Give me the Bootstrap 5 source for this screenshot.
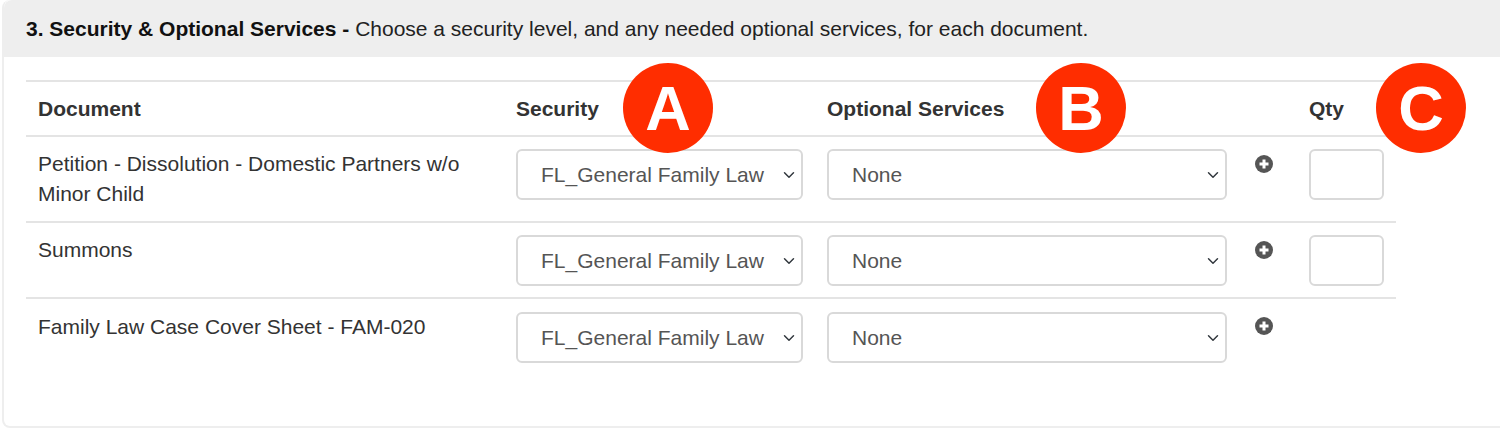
<!DOCTYPE html>
<html lang="en">

<head>
  <meta charset="UTF-8" />
  <meta name="viewport" content="width=device-width, initial-scale=1.0" />
  <title>Security &amp; Optional Services</title>
  <link href="https://cdn.jsdelivr.net/npm/bootstrap@5.3.0/dist/css/bootstrap.min.css" rel="stylesheet" />
  <style>
    body {
      background-color: #fff;
      color: #333;
      font-family: "Liberation Sans", Arial, sans-serif;
      font-size: 21px;
      overflow: hidden;
    }

    .step-wrap {
      padding-left: 2px;
      height: 431px;
      width: 1510px;
    }

    .step-card {
      height: 428px;
      border: 2px solid #eee;
      border-top: 0;
      border-radius: 8px;
      color: #333;
    }

    .step-head {
      height: 57px;
      background-color: #eee;
      border: 0;
      border-radius: 8px 8px 0 0 !important;
      padding: 16px 0 0 22px;
      line-height: 26px;
      color: #222;
    }

    .step-head b {
      color: #111;
    }

    .step-body {
      padding: 23px 0 0 22px;
    }

    .doc-table {
      width: 1370px;
      table-layout: fixed;
      margin: 0;
      --bs-table-color: #333;
      border-top: 2px solid #e4e4e4;
    }

    .doc-table th,
    .doc-table td {
      border-bottom: 2px solid #e4e4e4;
      padding: 12px;
      line-height: 30px;
      font-size: 21px;
      box-shadow: none;
    }

    .doc-table th {
      padding-top: 12px;
      padding-bottom: 11px;
    }

    .doc-table tbody td {
      padding-bottom: 11px;
    }

    .doc-table tbody tr:first-child td {
      padding-bottom: 12px;
    }

    .doc-table tr.last-row td {
      border-bottom: 0;
      padding-top: 13px;
    }

    .doc-select,
    .qty-input {
      height: 51px;
      border: 2px solid #d9d9d9;
      border-radius: 6px;
      color: #555;
      font-size: 21px;
      line-height: 28px;
      padding: 8px 30px 8px 23px;
      background-position: right 4px center;
    }

    .qty-input {
      width: 75px;
      padding: 8px;
    }

    .plus-ico {
      display: block;
      margin: 6px 0 0 4px;
    }

    .last-row .plus-ico {
      margin-top: 5px;
    }

    .mark-dot {
      position: absolute;
      top: 63px;
      width: 90px;
      height: 90px;
      border-radius: 50%;
      background-color: #ff2d00;
      color: #fff;
      font-size: 63px;
      font-weight: 700;
      line-height: 90px;
      text-align: center;
    }

    .mark-a { left: 623px; }
    .mark-b { left: 1036px; }
    .mark-c { left: 1376px; }
  </style>
</head>

<body>
  <div class="step-wrap position-relative">
    <div class="card step-card">
      <div class="card-header step-head">
        <b>3. Security &amp; Optional Services - </b>Choose a security level, and any needed optional services, for each document.
      </div>
      <div class="card-body step-body">
        <table class="table doc-table">
          <colgroup>
            <col style="width:478px" />
            <col style="width:311px" />
            <col style="width:424px" />
            <col style="width:58px" />
            <col style="width:99px" />
          </colgroup>
          <thead>
            <tr>
              <th>Document</th>
              <th>Security</th>
              <th colspan="2">Optional Services</th>
              <th>Qty</th>
            </tr>
          </thead>
          <tbody>
            <tr>
              <td>Petition - Dissolution - Domestic Partners w/o Minor Child</td>
              <td>
                <select class="form-select doc-select"><option>FL_General Family Law</option></select>
              </td>
              <td>
                <select class="form-select doc-select"><option>None</option></select>
              </td>
              <td>
                <svg class="plus-ico" width="18" height="18" viewBox="0 0 18 18"><circle cx="9" cy="9" r="9" fill="#555" /><path d="M9 4.5v9M4.5 9h9" stroke="#fff" stroke-width="3" /></svg>
              </td>
              <td><input type="text" class="form-control qty-input" /></td>
            </tr>
            <tr>
              <td>Summons</td>
              <td>
                <select class="form-select doc-select"><option>FL_General Family Law</option></select>
              </td>
              <td>
                <select class="form-select doc-select"><option>None</option></select>
              </td>
              <td>
                <svg class="plus-ico" width="18" height="18" viewBox="0 0 18 18"><circle cx="9" cy="9" r="9" fill="#555" /><path d="M9 4.5v9M4.5 9h9" stroke="#fff" stroke-width="3" /></svg>
              </td>
              <td><input type="text" class="form-control qty-input" /></td>
            </tr>
            <tr class="last-row">
              <td>Family Law Case Cover Sheet - FAM-020</td>
              <td>
                <select class="form-select doc-select"><option>FL_General Family Law</option></select>
              </td>
              <td>
                <select class="form-select doc-select"><option>None</option></select>
              </td>
              <td>
                <svg class="plus-ico" width="18" height="18" viewBox="0 0 18 18"><circle cx="9" cy="9" r="9" fill="#555" /><path d="M9 4.5v9M4.5 9h9" stroke="#fff" stroke-width="3" /></svg>
              </td>
              <td></td>
            </tr>
          </tbody>
        </table>
      </div>
    </div>
    <div class="mark-dot mark-a">A</div>
    <div class="mark-dot mark-b">B</div>
    <div class="mark-dot mark-c">C</div>
  </div>

  <script src="https://cdn.jsdelivr.net/npm/bootstrap@5.3.0/dist/js/bootstrap.bundle.min.js"></script>
</body>

</html>
